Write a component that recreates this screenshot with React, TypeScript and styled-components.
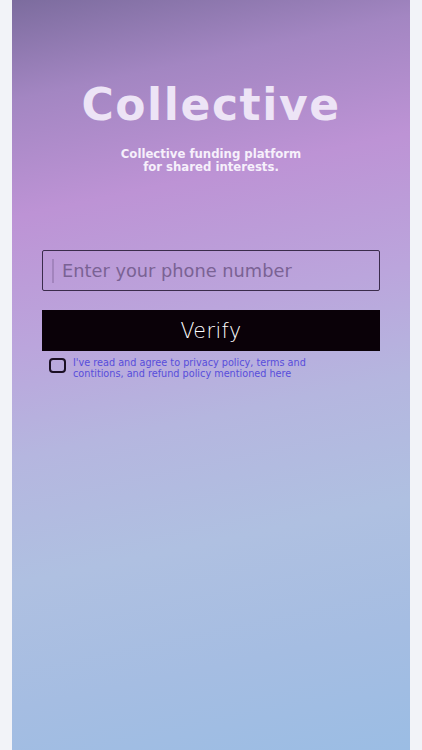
import React, { useState } from "react";
import styled, { createGlobalStyle } from "styled-components";

const GlobalStyle = createGlobalStyle`
	html, body {
		margin: 0;
		padding: 0;
		background: #f2f3f8;
	}
	* {
		box-sizing: border-box;
	}
`;

export default function App() {
	const [phone, setPhone] = useState<string>("");
	const [agreed, setAgreed] = useState<boolean>(false);

	return (
		<>
			<GlobalStyle />
			<Page>
				<Screen>
					<Hero>
						<Title>Collective</Title>
						<Tagline>
							Collective funding platform
							<br />
							for shared interests.
						</Tagline>
					</Hero>

					<Form>
						<PhoneField>
							<Caret />
							<PhoneInput
								type="tel"
								placeholder="Enter your phone number"
								value={phone}
								onChange={(e) => setPhone(e.target.value)}
							/>
						</PhoneField>

						<VerifyButton type="button">Verify</VerifyButton>

						<AgreeRow>
							<CheckBox
								type="button"
								$checked={agreed}
								onClick={() => setAgreed(!agreed)}
							/>
							<AgreeText>
								I've read and agree to privacy policy, terms and
								<br />
								contitions, and refund policy mentioned here
							</AgreeText>
						</AgreeRow>
					</Form>
				</Screen>
			</Page>
		</>
	);
}

const Page = styled.div`
	display: flex;
	justify-content: center;
	width: 100%;
	height: 750px;
	padding: 0 12px;
`;

const Screen = styled.main`
	display: flex;
	flex-direction: column;
	width: 398px;
	height: 750px;
	background: linear-gradient(
		168deg,
		#7c6c9e 0%,
		#a386c2 12%,
		#bd93d5 26%,
		#bba5dc 42%,
		#b5b6df 55%,
		#afc0e1 70%,
		#a5bde2 85%,
		#9bbde4 100%
	);
	font-family: "DejaVu Sans", "Noto Sans", sans-serif;
`;

const Hero = styled.section`
	display: flex;
	flex-direction: column;
	align-items: center;
	padding-top: 80px;
`;

const Title = styled.h1`
	margin: 0;
	font-size: 44px;
	font-weight: 700;
	letter-spacing: 1.6px;
	color: #ede4f6;
	line-height: 50px;
`;

const Tagline = styled.p`
	margin: 18px 0 0;
	font-size: 11.7px;
	font-weight: 700;
	line-height: 13px;
	text-align: center;
	color: #f6f0fb;
`;

const Form = styled.section`
	display: flex;
	flex-direction: column;
	padding: 76px 30px 0;
`;

const PhoneField = styled.label`
	display: flex;
	align-items: center;
	gap: 8px;
	height: 41px;
	padding: 0 9px;
	border: 1.5px solid #3b2c4c;
	border-radius: 2px;
`;

const Caret = styled.span`
	width: 2px;
	height: 24px;
	background: #a284bd;
`;

const PhoneInput = styled.input`
	flex: 1;
	border: none;
	outline: none;
	background: transparent;
	padding: 0;
	font-family: "DejaVu Sans", "Noto Sans", sans-serif;
	font-size: 17.8px;
	color: #3b2c4c;

	&::placeholder {
		color: #7a6294;
	}
`;

const VerifyButton = styled.button`
	margin-top: 19px;
	height: 41px;
	border: none;
	border-radius: 0;
	background: #0a0108;
	color: #ffffff;
	font-family: "DejaVu Sans", "Noto Sans", sans-serif;
	font-size: 20.5px;
	font-weight: 300;
	letter-spacing: 0.5px;
	cursor: pointer;
`;

const AgreeRow = styled.div`
	display: flex;
	align-items: flex-start;
	gap: 7px;
	margin-top: 7px;
	padding-left: 7px;
`;

const CheckBox = styled.button<{ $checked: boolean }>`
	flex: none;
	width: 17px;
	height: 15px;
	margin-top: 0;
	padding: 0;
	border: 2px solid #1c1024;
	border-radius: 4px;
	background: ${(p) => (p.$checked ? "#1c1024" : "transparent")};
	cursor: pointer;
`;

const AgreeText = styled.p`
	margin: 0;
	font-size: 9.7px;
	line-height: 10.5px;
	font-weight: 500;
	color: #574ddb;
`;
